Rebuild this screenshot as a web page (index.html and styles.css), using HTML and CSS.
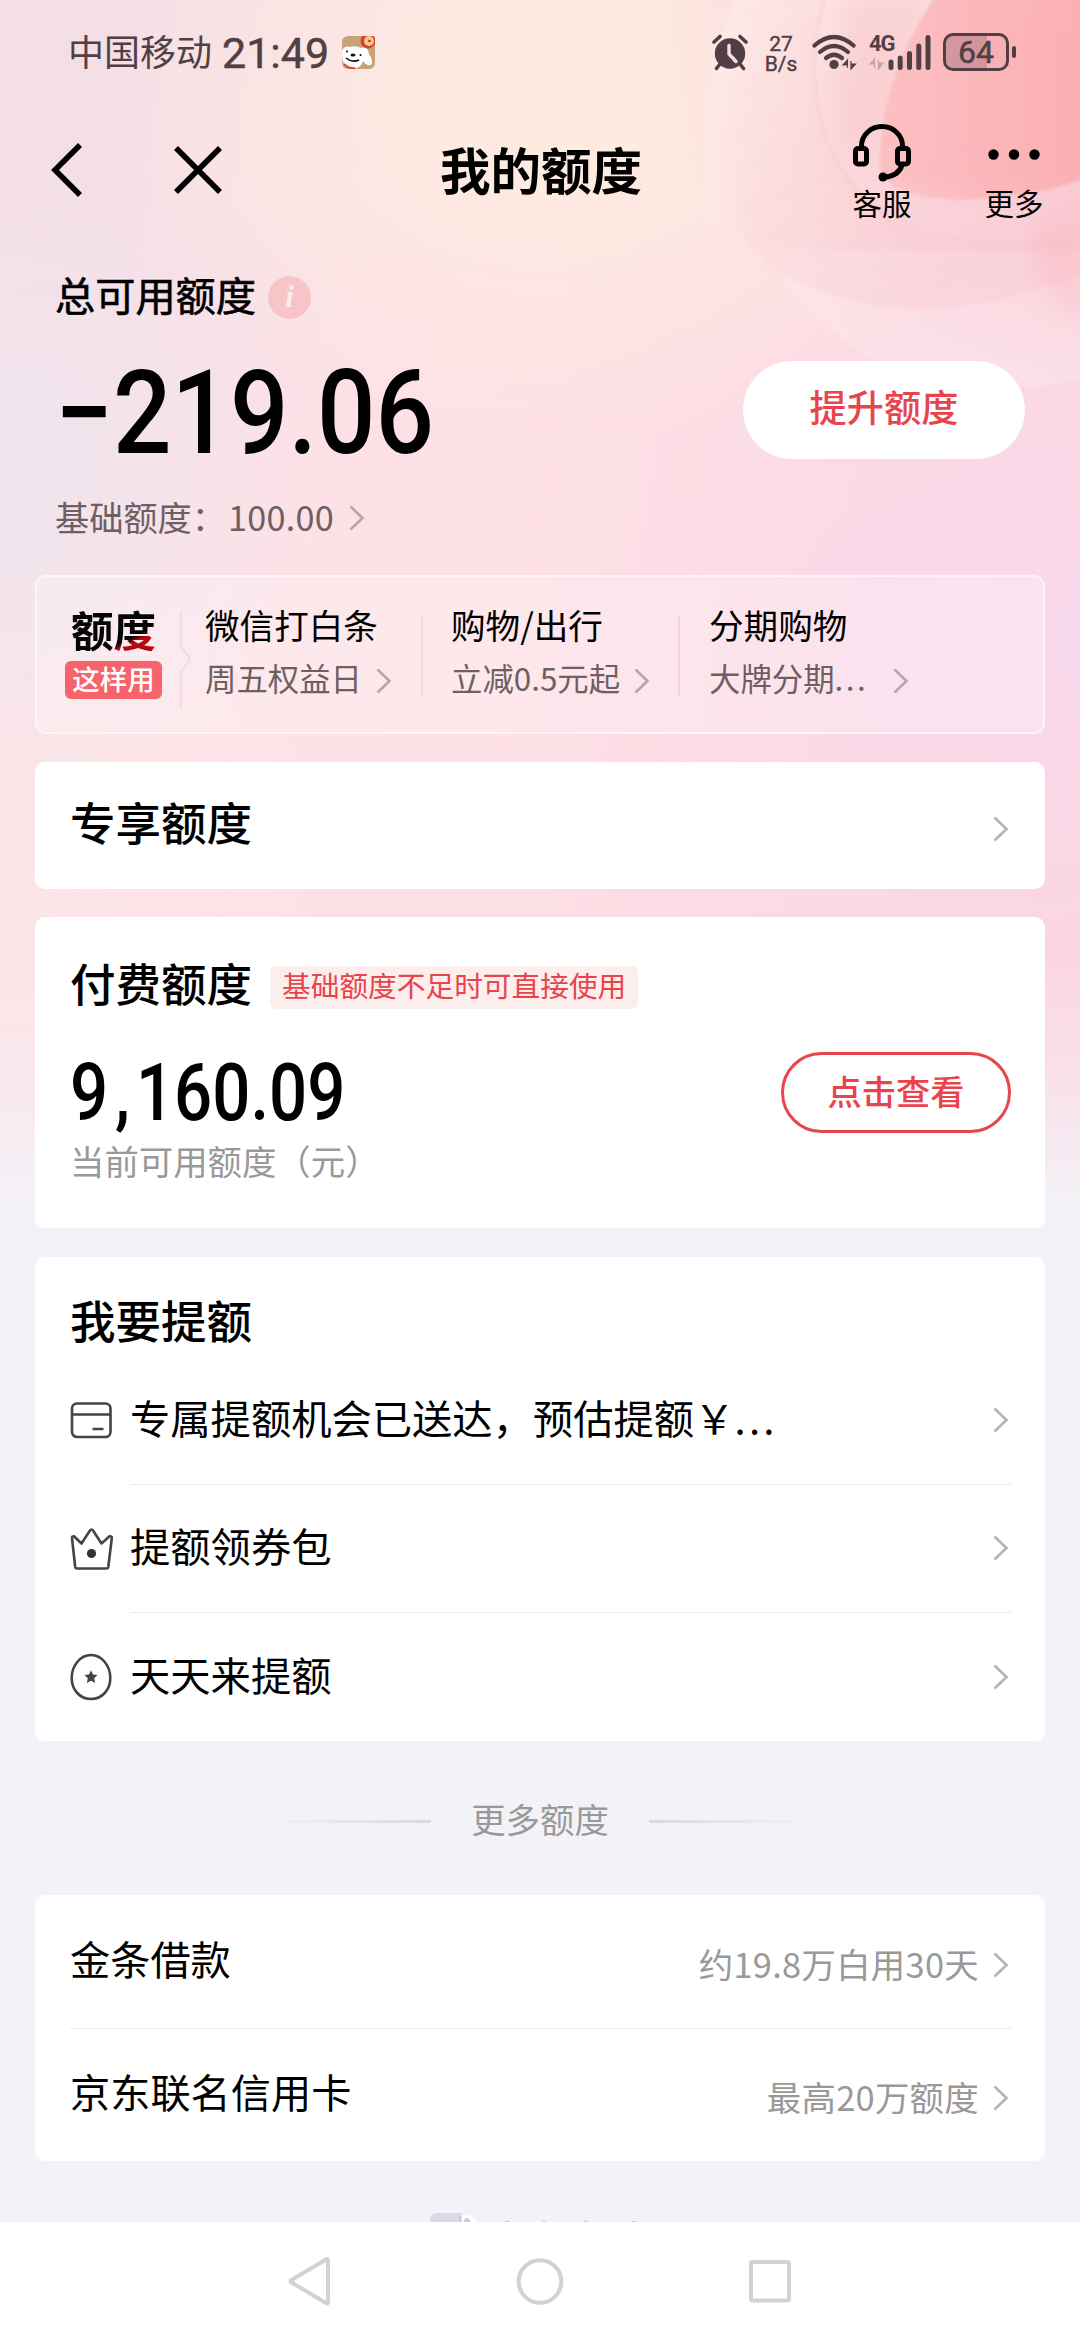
FILE: index.html
```html
<!DOCTYPE html>
<html lang="zh-CN">
<head>
<meta charset="utf-8">
<title>我的额度</title>
<link rel="stylesheet" href="styles.css">
</head>
<body>
<svg class="defs" width="0" height="0" aria-hidden="true">
  <symbol id="chev" viewBox="0 0 16 26"><path d="M1.5 1.5 13.5 13 1.5 24.5" fill="none" stroke="currentColor" stroke-width="2.6"/></symbol>
</svg>
<div class="screen">
  <svg class="rings" viewBox="0 0 1080 460" aria-hidden="true">
    <defs>
      <linearGradient id="core" x1="0" y1="0" x2="1" y2="0"><stop offset="0" stop-color="#fbbfc1"/><stop offset=".5" stop-color="#fbb4b8"/><stop offset="1" stop-color="#fbadb0"/></linearGradient>
      <linearGradient id="ringA" x1="0" y1="0" x2=".5" y2="1"><stop offset="0" stop-color="#fff" stop-opacity=".32"/><stop offset="1" stop-color="#f5bfc9" stop-opacity=".28"/></linearGradient>
      <linearGradient id="glow" x1="0" y1="0" x2="0" y2="1"><stop offset="0" stop-color="#ffe9e6" stop-opacity=".5"/><stop offset=".6" stop-color="#ffe3e6" stop-opacity=".25"/><stop offset="1" stop-color="#fde6ec" stop-opacity=".2"/></linearGradient>
      <filter id="soft" x="-20%" y="-20%" width="140%" height="140%"><feGaussianBlur stdDeviation="14"/></filter>
      <filter id="edge"><feGaussianBlur stdDeviation="1.5"/></filter>
    </defs>
    <path d="M780 275C840 350 900 388 1000 388Q1050 387 1080 380V250H780Z" fill="#fdebf0" opacity=".4" filter="url(#edge)"/>
    <path d="M738-5C705 70 700 150 730 215C765 285 850 310 930 308Q1020 304 1085 270V-5Z" fill="url(#ringA)" filter="url(#edge)"/>
    <path d="M738-5C705 70 700 150 730 215" fill="none" stroke="#fff0ee" stroke-width="22" opacity=".4" filter="url(#soft)"/>
    <path d="M826-5C800 80 818 175 890 215C960 250 1030 245 1085 225V-5Z" fill="url(#glow)" filter="url(#edge)"/>
    <path d="M826-5C800 80 818 175 890 215" fill="none" stroke="#f3c3c7" stroke-width="2" opacity=".5" filter="url(#edge)"/>
    <path d="M850-5C825 60 825 130 860 180L890 120L930-5Z" fill="#f6c3c5" opacity=".45" filter="url(#soft)"/>
    <path d="M936-5C900 50 878 110 880 170Q890 198 960 200Q1035 198 1085 178V-5Z" fill="url(#core)" opacity=".92" filter="url(#edge)"/>
    <path d="M870 185Q960 215 1085 200V235Q960 260 880 220Z" fill="#f9d0da" opacity=".7" filter="url(#soft)"/>
    <path d="M1085 190V320Q1030 290 1030 230Z" fill="#f9b8c2" opacity=".5" filter="url(#soft)"/>
  </svg>

  <header class="status">
    <span class="carrier">中国移动</span>
    <span class="clock">21:49</span>
    <svg class="dog" width="33" height="33" viewBox="0 0 33 33"><rect width="33" height="33" rx="6" fill="#c9a27a"/><circle cx="26" cy="5" r="7.5" fill="#d8402c"/><circle cx="27" cy="5" r="5" fill="#f2c98b"/><circle cx="27.500" cy="5" r="1.300" fill="#b5301d"/><path d="M0 15Q2 9 8 11Q14 9 19 12Q26 10 27 18Q32 25 29 29Q24 30 21 25Q19 33 11 32Q0 31 0 20Z" fill="#fff"/><path d="M5 14.500v2M18.500 18v2M4 22Q10 27 17 24" fill="none" stroke="#111" stroke-width="1.600"/><ellipse cx="11" cy="19" rx="2.500" ry="1.500" fill="#111"/><path d="M2 28Q7 33 13 32" stroke="#e6432c" stroke-width="2" fill="none"/></svg>
    <span class="grow"></span>
    <svg class="alarm" width="36" height="37" viewBox="0 0 36 37"><path d="M2 8 8 2.500M34 8 28 2.500M8 30 4.500 34.500M28 30 31.500 34.500" stroke="#504045" stroke-width="3.600" stroke-linecap="round"/><circle cx="18" cy="19.500" r="15.200" fill="#504045"/><path d="M17 11.500V20L24 27.500" fill="none" stroke="#fbdcdc" stroke-width="3.400" stroke-linecap="round"/></svg>
    <span class="speed"><span>27</span><span>B/s</span></span>
    <svg class="wifi" width="45" height="36" viewBox="0 0 45 36"><g fill="none" stroke="#504045" stroke-width="4.200" stroke-linecap="round"><path d="M2.500 11.500Q22 -5.500 41.500 11.500"/><path d="M8 18Q22 6 36 18"/><path d="M14 24Q22 17.500 30 24"/></g><circle cx="22" cy="30.500" r="4.600" fill="#504045"/><path d="M31 31h4.500v-5zM35.500 26v8M39 27v8M43.500 30H39v5z" fill="#504045" stroke="#504045" stroke-width="1.200"/></svg>
    <span class="cell"><span class="net">4G</span><svg width="62" height="36" viewBox="0 0 62 36"><path d="M1 30h4.500v-5zM5.500 25v9M9.500 26v9M14 29H9.500v6z" fill="#504045" stroke="#504045" stroke-width="1.200" opacity=".3"/><g stroke="#504045" stroke-width="5" stroke-linecap="round"><path d="M22 28v5.500M31.200 24v9.500M40.500 19.500v14M49.800 12v21.500M59 3.500v30"/></g></svg></span>
    <span class="battery"><span class="battery-cell">64</span><span class="battery-cap"></span></span>
  </header>

  <nav class="navbar">
    <div class="nav-left">
      <svg width="32" height="54" viewBox="0 0 32 54"><path d="M29 2 4 27 29 52" fill="none" stroke="#000" stroke-width="5.600"/></svg>
      <svg width="48" height="48" viewBox="0 0 48 48"><path d="M2 2 46 46M46 2 2 46" stroke="#000" stroke-width="5.600"/></svg>
    </div>
    <h1>我的额度</h1>
    <div class="nav-right">
      <div class="tool">
        <svg width="58" height="58" viewBox="0 0 58 58"><g fill="none" stroke="#000" stroke-width="5"><path d="M8.500 24V22A20.500 19.500 0 0 1 49.500 22V24"/><rect x="2.500" y="24.500" width="11" height="15.500" rx="2.500"/><rect x="44.500" y="24.500" width="11" height="15.500" rx="2.500"/><path d="M49 41Q46 52 30 53.500"/></g><circle cx="30" cy="53" r="4.500"/></svg>
        <span>客服</span>
      </div>
      <div class="tool">
        <svg width="58" height="58" viewBox="0 0 58 58"><circle cx="8.500" cy="30.500" r="5.200"/><circle cx="29" cy="30.500" r="5.200"/><circle cx="49.500" cy="30.500" r="5.200"/></svg>
        <span>更多</span>
      </div>
    </div>
  </nav>

  <section class="summary">
    <div class="summary-title"><span>总可用额度</span><span class="info">i</span></div>
    <div class="summary-main"><span class="total">−219.06</span><button class="raise">提升额度</button></div>
    <div class="base"><span>基础额度：</span><span class="base-num">100.00</span><svg class="chev"><use href="#chev"/></svg></div>
  </section>

  <main>
    <section class="strip">
      <div class="strip-logo"><b>额度</b><span>这样用</span></div>
      <svg class="notch" width="12" height="96" viewBox="0 0 12 96"><path d="M1 0V34Q1 37 4 39L9 46Q10 48 9 50L4 57Q1 59 1 62V96" fill="none" stroke="#efc8d2" stroke-opacity=".6" stroke-width="1.500"/></svg>
      <div class="use use-a"><p>微信打白条</p><p class="sub">周五权益日<svg class="chev"><use href="#chev"/></svg></p></div>
      <i class="bar"></i>
      <div class="use use-b"><p>购物/出行</p><p class="sub">立减0.5元起<svg class="chev"><use href="#chev"/></svg></p></div>
      <i class="bar bar-strong"></i>
      <div class="use use-c"><p>分期购物</p><p class="sub">大牌分期<span class="dots">...</span><svg class="chev"><use href="#chev"/></svg></p></div>
    </section>

    <section class="card exclusive"><h2>专享额度</h2><svg class="chev"><use href="#chev"/></svg></section>

    <section class="card paid">
      <div class="paid-head"><h2>付费额度</h2><span class="tag">基础额度不足时可直接使用</span></div>
      <div class="paid-main"><span class="paid-num">9<span class="comma">,</span>160.09</span><button class="view">点击查看</button></div>
      <p class="paid-note">当前可用额度（元）</p>
    </section>

    <section class="card lift">
      <h2>我要提额</h2>
      <ul>
        <li><svg width="44" height="50" viewBox="0 0 44 50"><g fill="none" stroke="#444" stroke-width="2.600"><rect x="2" y="8.500" width="38.500" height="33.500" rx="5"/><path d="M2 19.500H40.500M22.500 34H33.500"/></g></svg><div class="line">专属提额机会已送达，预估提额￥<span class="dots">...</span><svg class="chev"><use href="#chev"/></svg></div></li>
        <li><svg width="44" height="50" viewBox="0 0 44 50"><path d="M2 14Q2 12 4 12.300L11.500 19.500 20 6.500Q21.500 4.500 23 6.500L31.500 19.500 39.500 12.300Q42 12 41.800 14L38.300 43Q38 44.500 36.500 44.500H7Q5.500 44.500 5.200 43Z" fill="none" stroke="#444" stroke-width="2.600" stroke-linejoin="round"/><circle cx="21.500" cy="29.500" r="4.600" fill="#333"/></svg><div class="line">提额领券包<svg class="chev"><use href="#chev"/></svg></div></li>
        <li><svg width="44" height="50" viewBox="0 0 44 50"><path d="M21 3C32 3 40.300 14 40.300 26C40.300 38 32 47 21 47C10 47 1.700 38 1.700 26C1.700 14 10 3 21 3Z" fill="none" stroke="#444" stroke-width="2.600"/><path d="M21 18.300 23 22.600 27.500 23.100 24.200 26.300 25.100 31 21 28.700 16.900 31 17.800 26.300 14.500 23.100 19 22.600Z" fill="#444"/></svg><div class="line">天天来提额<svg class="chev"><use href="#chev"/></svg></div></li>
      </ul>
    </section>

    <div class="more"><i></i><span>更多额度</span><i class="flip"></i></div>

    <section class="card others">
      <div class="other"><span>金条借款</span><em>约19.8万白用30天</em><svg class="chev"><use href="#chev"/></svg></div>
      <div class="other"><span>京东联名信用卡</span><em>最高20万额度</em><svg class="chev"><use href="#chev"/></svg></div>
    </section>
  </main>

  <footer class="brand">
    <svg width="46" height="40" viewBox="0 0 46 40"><path d="M0 7Q1 0 7 0H32L26 40H0Z" fill="#dadae8"/><circle cx="37" cy="12" r="10" fill="#fff"/><path d="M30 3V14M34 12Q37 1 40 12" stroke="#c9c7d9" stroke-width="3" fill="none"/></svg>
    <span>京东金融</span>
  </footer>

  <div class="keys">
    <svg width="46" height="50" viewBox="0 0 46 50"><path d="M41 4.500Q41 2 39 3.500L4.500 24Q2.500 25.300 4.500 26.500L39 47Q41 48.500 41 46Z" fill="none" stroke="#d2d2d2" stroke-width="4"/></svg>
    <svg width="50" height="50" viewBox="0 0 50 50"><circle cx="25" cy="25.500" r="21.300" fill="none" stroke="#d2d2d2" stroke-width="4"/></svg>
    <svg width="46" height="50" viewBox="0 0 46 50"><rect x="4" y="6" width="38" height="38.500" rx="1.500" fill="none" stroke="#d2d2d2" stroke-width="4"/></svg>
  </div>
</div>
</body>
</html>
```
FILE: styles.css
```css
* { box-sizing: border-box; margin: 0; padding: 0; }

body {
  width: 1080px;
  background: #f3f2f8;
  color: #000;
  font-family: "Noto Sans CJK SC", sans-serif;
}

.defs { position: absolute; }
svg { display: block; flex: none; }
i, em { font-style: normal; }
ul { list-style: none; }
button { border: 0; font-family: inherit; }

.screen {
  position: relative;
  isolation: isolate;
  display: flex;
  flex-direction: column;
  width: 1080px;
  height: 2340px;
  overflow: hidden;
  background:
    linear-gradient(180deg, rgba(243, 242, 248, 0) 960px, rgba(243, 242, 248, .35) 1070px, #f3f2f8 1210px),
    radial-gradient(ellipse 420px 330px at 1080px 60px, rgba(250, 176, 182, .8), rgba(250, 176, 182, 0)),
    radial-gradient(ellipse 480px 330px at 560px 110px, #fdebe0 15%, rgba(253, 235, 224, 0)),
    radial-gradient(ellipse 420px 300px at 1040px 640px, rgba(248, 217, 238, .85), rgba(248, 217, 238, 0)),
    radial-gradient(ellipse 330px 330px at 0 480px, rgba(237, 229, 239, .9), rgba(237, 229, 239, 0)),
    radial-gradient(ellipse 460px 480px at 60px 60px, rgba(244, 222, 230, .95) 20%, rgba(244, 222, 230, 0)),
    radial-gradient(ellipse 330px 300px at 0 840px, #fbe6e7, rgba(251, 230, 231, 0)),
    linear-gradient(100deg, #fde3e6 0%, #fde0e6 40%, #fbd6e2 80%, #fbd5e1 100%);
}

.rings { position: absolute; left: 0; top: 0; width: 1080px; height: 460px; z-index: -1; }

.chev { width: 16px; height: 26px; color: #b4b4b4; }

/* status bar */
.status {
  display: flex;
  align-items: center;
  height: 104px;
  padding: 0 64px 0 68px;
  color: #504045;
}
.grow { flex: 1; }
.carrier { font-size: 36px; line-height: 52px; padding-bottom: 5px; }
.clock { margin-left: 10px; font: 400 43px/52px Roboto, sans-serif; padding-top: 2px; -webkit-text-stroke: .5px #504045; }
.dog { margin-left: 13px; }
.speed {
  display: flex;
  flex-direction: column;
  align-items: center;
  width: 34px;
  margin: 3px 14px 0 16px;
  font: 400 21px/20px Roboto, sans-serif;
  -webkit-text-stroke: .4px #504045;
}
.cell { position: relative; margin: 0 12px 0 12px; }
.net { position: absolute; left: 0; top: -1px; font: 700 22px/22px Roboto, sans-serif; letter-spacing: -1px; }
.battery { display: flex; align-items: center; gap: 3px; }
.battery-cell {
  width: 66px;
  height: 38px;
  border: 3px solid #504045;
  border-radius: 10px;
  background: linear-gradient(90deg, rgba(120, 70, 80, .3) 68%, rgba(120, 70, 80, .04) 68%);
  font: 400 32px/33px Roboto, sans-serif;
  -webkit-text-stroke: .5px #504045;
  text-align: center;
}
.battery-cap { width: 4px; height: 12px; border-radius: 2px; background: #504045; }

/* title bar */
.navbar {
  display: grid;
  grid-template-columns: 1fr auto 1fr;
  align-items: center;
  height: 132px;
  padding: 0 37px 0 51px;
}
.nav-left { display: flex; align-items: center; gap: 91px; }
.navbar h1 { font-size: 50.5px; line-height: 72px; font-weight: 700; padding: 0 12px 5px 0; }
.nav-right { display: flex; justify-content: flex-end; gap: 74px; padding-top: 3px; }
.tool { display: flex; flex-direction: column; align-items: center; width: 58px; white-space: nowrap; }
.tool span { font-size: 29.5px; line-height: 36px; margin-top: 2px; }

/* summary */
.summary { padding: 28px 55px 35px; }
.summary-title { display: flex; align-items: center; gap: 12px; height: 60px; font-size: 40.2px; line-height: 60px; -webkit-text-stroke: .6px #000; }
.info {
  width: 43px;
  height: 43px;
  margin-top: 7px;
  border-radius: 50%;
  background: #f7c5c8;
  color: #fdeced;
  font: italic 700 31px/42px "Liberation Serif", serif;
  -webkit-text-stroke: 0;
  text-align: center;
}
.summary-main { display: flex; align-items: center; justify-content: space-between; height: 98px; margin-top: 37px; }
.total { padding-top: 5px; font: 500 117px/98px Roboto, sans-serif; transform: scaleX(.88); transform-origin: left; }
.raise {
  width: 282px;
  height: 98px;
  padding-bottom: 8px;
  border-radius: 49px;
  background: #fff;
  color: #e8444c;
  font-size: 37.2px;
  font-weight: 500;
}
.base { display: flex; align-items: center; height: 50px; margin-top: 32px; margin-bottom: -1px; font-size: 34.2px; line-height: 50px; color: #6e5f63; }
.base-num { margin-left: 2px; letter-spacing: .3px; }
.base .chev { margin: 3px 0 0 15px; color: #b7a5ab; }

/* cards */
main { display: flex; flex-direction: column; gap: 28px; padding: 0 35px; }
.card { border-radius: 10px; background: #fff; }
h2 { font-size: 45.5px; line-height: 66px; font-weight: 500; }

.strip {
  display: flex;
  height: 159px;
  border: 2px solid rgba(255, 255, 255, .55);
  border-radius: 11px;
  background: rgba(255, 255, 255, .26);
}
.strip-logo { display: flex; flex-direction: column; align-items: center; width: 97px; margin-left: 28px; }
.strip-logo b {
  margin-top: 25px;
  font-size: 42.5px;
  line-height: 54px;
  font-weight: 700;
  background: linear-gradient(155deg, #050505 68%, #b40812 74%);
  -webkit-background-clip: text;
  background-clip: text;
  color: transparent;
}
.strip-logo span {
  width: 97px;
  height: 38px;
  margin-top: 5px;
  border-radius: 6px;
  background: #f7636a;
  color: #fff;
  font-size: 27.500px;
  line-height: 34px;
  font-weight: 500;
  text-align: center;
}
.notch { margin: 34px 0 0 18px; }
.use { padding-top: 22px; font-size: 34.6px; line-height: 50px; white-space: nowrap; }
.use .sub { display: flex; align-items: center; margin-top: 6px; font-size: 31.4px; line-height: 46px; color: #6e5f63; }
.use .chev { margin: 6px 0 0 14px; color: #b7a5ab; }
.use-a { width: 216px; margin-left: 13px; }
.use-b { width: 227px; margin-left: 28px; }
.use-c { margin-left: 29px; }
.use-c .chev { margin-left: 25px; }
.bar { width: 2px; height: 80px; margin-top: 39px; background: rgba(240, 195, 208, .4); }
.bar-strong { background: rgba(240, 185, 200, .5); }
.dots { letter-spacing: .08em; }

.exclusive { display: flex; align-items: center; justify-content: space-between; height: 127px; padding: 0 36px 0 35px; }
.exclusive h2 { padding-bottom: 10px; }
.exclusive .chev { margin-top: 7px; }

.paid { height: 311px; padding: 32px 34px 0 35px; }
.paid-head { display: flex; align-items: center; gap: 18px; height: 66px; }
.tag {
  height: 43px;
  margin-top: 10px;
  padding: 0 12px;
  border-radius: 6px;
  background: #fdeeee;
  color: #e8444c;
  font-size: 28.700px;
  line-height: 37px;
}
.paid-main { display: flex; align-items: center; justify-content: space-between; height: 81px; margin-top: 37px; }
.paid-num { padding-top: 2px; font: 500 79px/81px Roboto, sans-serif; transform: scaleX(.85); transform-origin: left; }
.comma { margin: 0 7px 0 8px; }
.view {
  width: 230px;
  height: 81px;
  padding-bottom: 6px;
  border: 3px solid #e8444c;
  border-radius: 41px;
  background: #fff;
  color: #e8444c;
  font-size: 34.2px;
  font-weight: 500;
}
.paid-note { margin-top: 2px; font-size: 34.4px; line-height: 50px; color: #999; }

.lift { height: 484px; margin-top: 1px; padding: 29px 34px 0 35px; }
.lift ul { margin-top: 4px; }
.lift li { display: flex; align-items: center; height: 128.5px; }
.lift li > svg { margin-right: 16px; }
.line {
  display: flex;
  align-items: center;
  flex: 1;
  height: 100%;
  padding-bottom: 7px;
  border-bottom: 1.5px solid #ececec;
  font-size: 40.3px;
  white-space: nowrap;
}
.lift li:last-child .line { border: 0; }
.line .chev { margin: 7px 2px 0 auto; }

.more { display: flex; align-items: center; justify-content: center; gap: 40px; height: 98px; color: #999; font-size: 34.4px; line-height: 50px; }
.more span { padding-bottom: 1px; }
.more i { width: 167px; height: 3px; margin-top: 7px; background: linear-gradient(90deg, rgba(215, 215, 220, 0), #d9d9dc); }
.more .flip { transform: scaleX(-1); }

.others { height: 266px; padding: 0 34px 0 35px; }
.other { display: flex; align-items: center; height: 133px; font-size: 40.2px; line-height: 58px; }
.other + .other { border-top: 1.5px solid #ececec; }
.other span { flex: 1; padding-bottom: 8px; }
.other em { font-size: 34.4px; line-height: 50px; color: #999; margin: 2px 14px 0 0; letter-spacing: .3px; }
.other .chev { margin: 6px 2px 0 0; }

/* brand line, cut off by the system keys */
.brand { display: flex; align-items: flex-start; justify-content: center; gap: 12px; height: 61px; padding: 52px 6px 0 0; overflow: hidden; }
.brand span { font-size: 39px; line-height: 50px; margin-top: -1px; font-weight: 700; color: #c9c7d9; }

.keys { display: flex; align-items: center; justify-content: center; gap: 182px; height: 118px; background: #fff; }
```
